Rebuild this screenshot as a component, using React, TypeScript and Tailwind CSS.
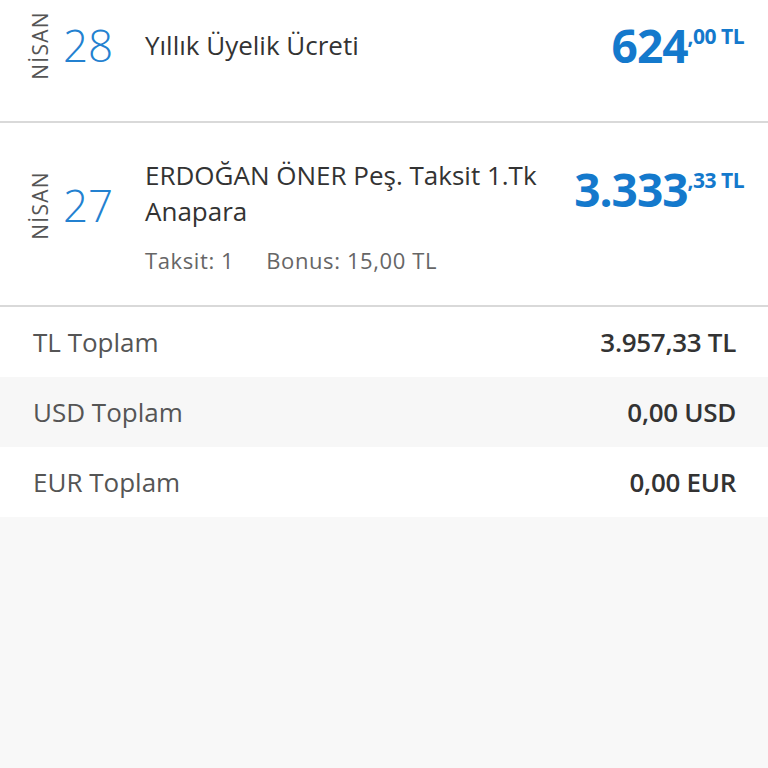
import React from 'react';

const font = { fontFamily: '"Open Sans", "Noto Sans", sans-serif' };

interface Txn {
  month: string;
  day: string;
  title: string;
  meta?: { taksit: string; bonus: string };
  whole: string;
  frac: string;
}

const Amount: React.FC<{ whole: string; frac: string }> = ({ whole, frac }) => (
  <div className="flex items-start text-[#1479cc] font-bold">
    <span className="text-[46px] leading-none tracking-[-1px]">{whole}</span>
    <span className="text-[21px] leading-none mt-[4px] tracking-[-0.5px]">
      {frac} TL
    </span>
  </div>
);

const DateBlock: React.FC<{ month: string; day: string }> = ({ month, day }) => (
  <div className="flex items-center w-[115px] shrink-0">
    <span className="[writing-mode:vertical-rl] rotate-180 text-[21px] leading-none text-[#555] tracking-[1.3px]">
      {month}
    </span>
    <span className="ml-[12px] text-[44px] leading-none text-[#2381d0] font-light">{day}</span>
  </div>
);

const rows: Txn[] = [
  { month: 'NİSAN', day: '28', title: 'Yıllık Üyelik Ücreti', whole: '624', frac: ',00' },
  {
    month: 'NİSAN',
    day: '27',
    title: 'ERDOĞAN ÖNER Peş. Taksit 1.Tk Anapara',
    meta: { taksit: '1', bonus: '15,00 TL' },
    whole: '3.333',
    frac: ',33',
  },
];

const totals = [
  { label: 'TL Toplam', value: '3.957,33 TL', bg: 'bg-white' },
  { label: 'USD Toplam', value: '0,00 USD', bg: 'bg-[#f7f7f7]' },
  { label: 'EUR Toplam', value: '0,00 EUR', bg: 'bg-white' },
];

export default function App() {
  return (
    <div className="min-h-[768px] bg-[#f8f8f8]" style={font}>
      {/* first row is scrolled partly out of view */}
      <div className="flex items-center h-[123px] pb-[31px] pl-[30px] pr-[24px] bg-white border-b-2 border-[#d9d9d9]">
        <DateBlock month={rows[0].month} day={rows[0].day} />
        <div className="flex-1 text-[26px] text-[#333] leading-[36px]">{rows[0].title}</div>
        <Amount whole={rows[0].whole} frac={rows[0].frac} />
      </div>

      <div className="flex items-start h-[184px] pl-[30px] pr-[24px] pt-[34px] bg-white border-b-2 border-[#d9d9d9]">
        <div className="mt-[14px]">
          <DateBlock month={rows[1].month} day={rows[1].day} />
        </div>
        <div className="flex-1 pr-[12px]">
          <div className="text-[26px] text-[#333] leading-[36px]">{rows[1].title}</div>
          <div className="mt-[17px] flex gap-[32px] text-[22px] text-[#666] leading-[28px] tracking-[0.6px]">
            <span>Taksit: {rows[1].meta?.taksit}</span>
            <span>Bonus: {rows[1].meta?.bonus}</span>
          </div>
        </div>
        <div className="mt-[9px]">
          <Amount whole={rows[1].whole} frac={rows[1].frac} />
        </div>
      </div>

      {totals.map((t) => (
        <div
          key={t.label}
          className={`flex items-center justify-between h-[70px] pl-[33px] pr-[32px] ${t.bg}`}
        >
          <span className="text-[26px] text-[#555]">{t.label}</span>
          <span className="text-[26px] font-semibold text-[#333] tracking-[-0.3px]">{t.value}</span>
        </div>
      ))}
    </div>
  );
}
